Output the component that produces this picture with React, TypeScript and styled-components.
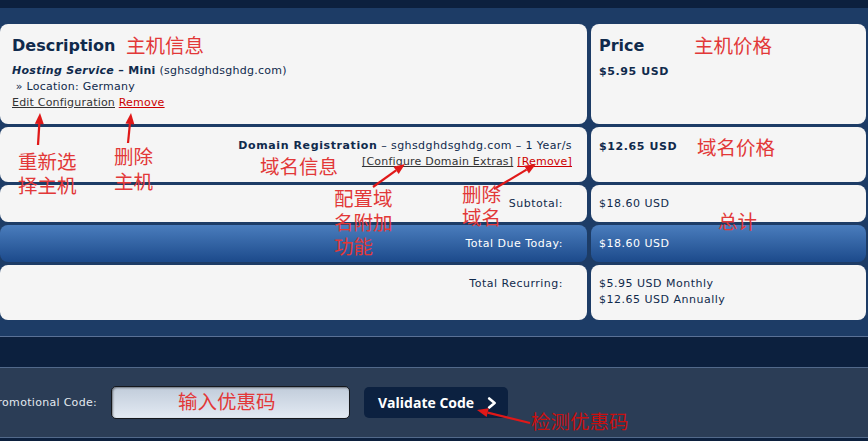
import React from "react";
import styled, { createGlobalStyle } from "styled-components";

const GlobalStyle = createGlobalStyle`
  html, body {
    margin: 0;
    padding: 0;
    background: #0c203e;
  }
  body {
    font-family: "DejaVu Sans", Verdana, sans-serif;
    overflow: hidden;
  }
`;

const arrows: [number, number, number, number][] = [
  [38, 145, 40, 113],
  [128, 143, 131, 113],
  [373, 187, 405, 164],
  [494, 189, 536, 164],
  [530, 423, 477, 410],
];

const Arrow: React.FC<{ a: [number, number, number, number] }> = ({ a }) => {
  const [x1, y1, x2, y2] = a;
  const ang = Math.atan2(y2 - y1, x2 - x1);
  const len = 11;
  const half = 4.5;
  const bx = x2 - Math.cos(ang) * len;
  const by = y2 - Math.sin(ang) * len;
  const nx = -Math.sin(ang) * half;
  const ny = Math.cos(ang) * half;
  return (
    <g>
      <line x1={x1} y1={y1} x2={bx} y2={by} stroke="#e01818" strokeWidth={2.2} />
      <polygon
        points={`${x2},${y2} ${bx + nx},${by + ny} ${bx - nx},${by - ny}`}
        fill="#e01818"
      />
    </g>
  );
};

export default function App() {
  return (
    <>
      <GlobalStyle />
      <Page>
        <TopStrip />
        <CartArea>
          <CartGrid>
            <DescCell>
              <Heading>Description</Heading>
              <div>
                <b>
                  <i>Hosting Service</i> – Mini
                </b>{" "}
                (sghsdghdsghdg.com)
              </div>
              <div>&nbsp;» Location: Germany</div>
              <div>
                <TextLink>Edit Configuration</TextLink> <TextLink $red>Remove</TextLink>
              </div>
            </DescCell>
            <PriceCell>
              <Heading>Price</Heading>
              <Amount>$5.95 USD</Amount>
            </PriceCell>

            <ItemCell>
              <div>
                <b>Domain Registration</b> – sghsdghdsghdg.com – 1 Year/s
              </div>
              <div>
                <TextLink>[Configure Domain Extras]</TextLink> <TextLink $red>[Remove]</TextLink>
              </div>
            </ItemCell>
            <PriceCell $row2>
              <Amount>$12.65 USD</Amount>
            </PriceCell>

            <SumLabel>Subtotal:</SumLabel>
            <SumValue>$18.60 USD</SumValue>

            <SumLabel $total>Total Due Today:</SumLabel>
            <SumValue $total>$18.60 USD</SumValue>

            <SumLabel $top>Total Recurring:</SumLabel>
            <SumValue $top>
              <div>$5.95 USD Monthly</div>
              <div>$12.65 USD Annually</div>
            </SumValue>
          </CartGrid>
        </CartArea>
        <DarkBand />
        <PromoBar>
          <PromoLabel>Promotional Code:</PromoLabel>
          <CodeInput type="text" />
          <ValidateButton>
            <span>Validate Code</span>
            <svg width="10" height="12" viewBox="0 0 10 12">
              <polyline
                points="2.2,1.5 7.6,6 2.2,10.5"
                fill="none"
                stroke="#fff"
                strokeWidth="2.6"
                strokeLinecap="round"
                strokeLinejoin="round"
              />
            </svg>
          </ValidateButton>
        </PromoBar>

        <Overlay width="868" height="441">
          {arrows.map((a, i) => (
            <Arrow key={i} a={a} />
          ))}
        </Overlay>
        <Note $x={126} $y={33}>主机信息</Note>
        <Note $x={694} $y={33}>主机价格</Note>
        <Note $x={697} $y={135}>域名价格</Note>
        <Note $x={18} $y={149}>
          重新选
          <br />
          择主机
        </Note>
        <Note $x={114} $y={143} $lh={25}>
          删除
          <br />
          主机
        </Note>
        <Note $x={260} $y={154}>域名信息</Note>
        <Note $x={334} $y={186}>
          配置域
          <br />
          名附加
          <br />
          功能
        </Note>
        <Note $x={462} $y={182} $lh={23}>
          删除
          <br />
          域名
        </Note>
        <Note $x={718} $y={209}>总计</Note>
        <Note $x={178} $y={389}>输入优惠码</Note>
        <Note $x={531} $y={409} $dark>
          检测优惠码
        </Note>
      </Page>
    </>
  );
}

const Page = styled.div`
  position: relative;
  width: 868px;
  height: 441px;
  overflow: hidden;
  background: #0c203e;
`;

const TopStrip = styled.div`
  height: 8px;
  background: #0c203e;
`;

const CartArea = styled.div`
  background: #1d3c66;
  padding: 16px 2px 16px 0;
  border-bottom: 1px solid #5a7196;
`;

const CartGrid = styled.div`
  display: grid;
  grid-template-columns: 587px 275px;
  grid-template-rows: 100px 55px 37px 37px 55px;
  column-gap: 4px;
  row-gap: 3px;
`;

const Cell = styled.div<{ $total?: boolean }>`
  box-sizing: border-box;
  border-radius: 8px;
  background: ${(p) => (p.$total ? "linear-gradient(#4a7dbd, #1c4a8b)" : "#f5f5f5")};
  color: ${(p) => (p.$total ? "#ffffff" : "#102a4c")};
  font-size: 11px;
  line-height: 16px;
  letter-spacing: 0.25px;
  white-space: nowrap;

  b {
    letter-spacing: 0.3px;
  }
`;

const DescCell = styled(Cell)`
  padding: 12px 12px;
`;

const ItemCell = styled(Cell)`
  padding: 11px 15px;
  text-align: right;
  letter-spacing: 0.4px;

  b {
    letter-spacing: 0.6px;
  }
`;

const PriceCell = styled(Cell)<{ $row2?: boolean }>`
  padding: ${(p) => (p.$row2 ? "11px" : "12px")} 8px;
`;

const SumLabel = styled(Cell)<{ $top?: boolean }>`
  display: flex;
  justify-content: flex-end;
  align-items: ${(p) => (p.$top ? "flex-start" : "center")};
  padding: ${(p) => (p.$top ? "11px 24px 0" : "0 24px")};
  letter-spacing: 0.5px;
`;

const SumValue = styled(Cell)<{ $top?: boolean }>`
  display: flex;
  flex-direction: column;
  justify-content: ${(p) => (p.$top ? "flex-start" : "center")};
  padding: ${(p) => (p.$top ? "11px 8px 0" : "0 8px")};
  letter-spacing: 0.5px;
`;

const Heading = styled.div`
  font-size: 16px;
  line-height: 20px;
  font-weight: bold;
  letter-spacing: 0;
  margin-bottom: 7px;
`;

const Amount = styled.div`
  font-weight: bold;
  letter-spacing: 0.6px;
  padding-top: 1px;
`;

const TextLink = styled.span<{ $red?: boolean }>`
  color: ${(p) => (p.$red ? "#cc0000" : "#333333")};
  text-decoration: underline;
  letter-spacing: 0.2px;
  cursor: pointer;
`;

const DarkBand = styled.div`
  height: 30px;
  background: #0c203e;
  border-bottom: 1px solid #52698a;
`;

const PromoBar = styled.div`
  height: 69px;
  display: flex;
  align-items: center;
  background: #2b3d56;
  border-bottom: 1px solid #52698a;
`;

const PromoLabel = styled.div`
  width: 97px;
  flex: none;
  display: flex;
  justify-content: flex-end;
  white-space: nowrap;
  margin-right: 14px;
  color: #e3e9f0;
  font-size: 11px;
  letter-spacing: 0.3px;
`;

const CodeInput = styled.input`
  box-sizing: border-box;
  flex: none;
  width: 239px;
  height: 33px;
  margin: 0 14px 0 0;
  border: 1px solid #15181d;
  border-radius: 5px;
  background: linear-gradient(#c1ccda, #e3eaf3);
  box-shadow: inset 1px 1px 2px rgba(0, 0, 0, 0.45);
  outline: none;
`;

const ValidateButton = styled.button`
  box-sizing: border-box;
  flex: none;
  width: 144px;
  height: 31px;
  display: flex;
  align-items: center;
  gap: 13px;
  padding: 0 10px 0 14px;
  border: none;
  border-radius: 5px;
  background: #0c2140;
  color: #ffffff;
  font-family: "Open Sans", "DejaVu Sans", sans-serif;
  font-size: 14px;
  font-weight: 700;
  white-space: nowrap;
  cursor: pointer;

  svg {
    flex: none;
  }
`;

const Overlay = styled.svg`
  position: absolute;
  left: 0;
  top: 0;
  pointer-events: none;
`;

const Note = styled.div<{ $x: number; $y: number; $lh?: number; $dark?: boolean }>`
  position: absolute;
  left: ${(p) => p.$x}px;
  top: ${(p) => p.$y}px;
  font-family: "Noto Sans CJK SC", sans-serif;
  font-size: 19.5px;
  line-height: ${(p) => p.$lh ?? 24}px;
  color: ${(p) => (p.$dark ? "#c81010" : "#e23838")};
  white-space: nowrap;
  pointer-events: none;
`;
